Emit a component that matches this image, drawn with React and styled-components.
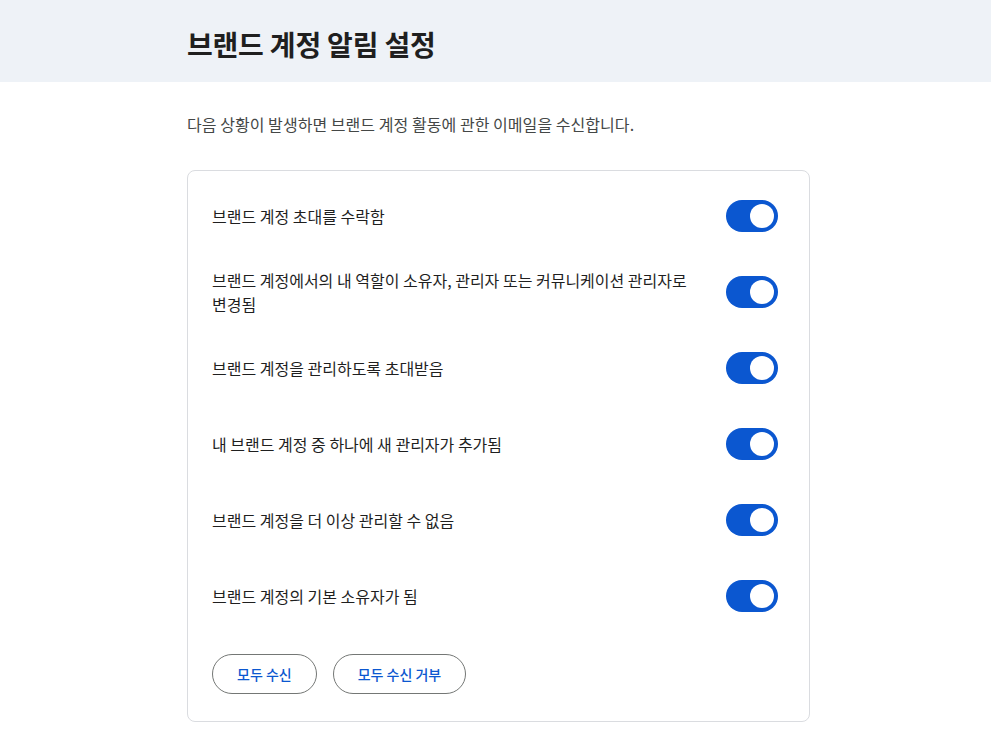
import React, { useState } from "react";
import styled, { createGlobalStyle } from "styled-components";

const GlobalStyle = createGlobalStyle`
  body {
    margin: 0;
    background: #fff;
    font-family: "Noto Sans CJK KR", "Noto Sans", Roboto, sans-serif;
    color: #1f1f1f;
  }
`;

const Header = styled.header`
  background: #eef2f7;
  height: 82px;
  display: flex;
  align-items: center;
  padding-left: 187px;
`;

const Title = styled.h1`
  margin: 6px 0 0;
  font-size: 28px;
  font-weight: 700;
  letter-spacing: -0.2px;
  color: #1f1f1f;
`;

const Main = styled.main`
  padding: 30px 0 0 187px;
`;

const Intro = styled.p`
  margin: 0 0 34px;
  font-size: 16px;
  line-height: 24px;
  letter-spacing: 0.05px;
  color: #444746;
`;

const Card = styled.section`
  box-sizing: border-box;
  width: 623px;
  border: 1px solid #dadce0;
  border-radius: 8px;
  padding: 7px 31px 27px 24px;
`;

const Row = styled.div`
  min-height: 76px;
  display: flex;
  align-items: center;
  justify-content: space-between;
  gap: 24px;
`;

const Label = styled.span`
  font-size: 16px;
  line-height: 24px;
  color: #1f1f1f;
  max-width: 490px;
`;

const Track = styled.button`
  flex: none;
  position: relative;
  width: 52px;
  height: 32px;
  border: none;
  border-radius: 16px;
  padding: 0;
  cursor: pointer;
  background: ${(p) => (p.$on ? "#0b57d0" : "#c4c7c5")};
`;

const Knob = styled.span`
  position: absolute;
  top: 4px;
  left: ${(p) => (p.$on ? "24px" : "4px")};
  width: 24px;
  height: 24px;
  border-radius: 50%;
  background: #fff;
`;

const Actions = styled.div`
  display: flex;
  gap: 16px;
  margin-top: 20px;
`;

const PillButton = styled.button`
  height: 40px;
  padding: 0 24px;
  border: 1px solid #747775;
  border-radius: 20px;
  background: #fff;
  color: #0b57d0;
  font-family: inherit;
  font-size: 14px;
  font-weight: 500;
  cursor: pointer;
`;

const ITEMS = [
  "브랜드 계정 초대를 수락함",
  "브랜드 계정에서의 내 역할이 소유자, 관리자 또는 커뮤니케이션 관리자로 변경됨",
  "브랜드 계정을 관리하도록 초대받음",
  "내 브랜드 계정 중 하나에 새 관리자가 추가됨",
  "브랜드 계정을 더 이상 관리할 수 없음",
  "브랜드 계정의 기본 소유자가 됨",
];

export default function App() {
  const [flags, setFlags] = useState(ITEMS.map(() => true));

  const toggle = (i) =>
    setFlags((f) => f.map((v, idx) => (idx === i ? !v : v)));

  return (
    <>
      <GlobalStyle />
      <Header>
        <Title>브랜드 계정 알림 설정</Title>
      </Header>
      <Main>
        <Intro>다음 상황이 발생하면 브랜드 계정 활동에 관한 이메일을 수신합니다.</Intro>
        <Card>
          {ITEMS.map((text, i) => (
            <Row key={i}>
              <Label>{text}</Label>
              <Track $on={flags[i]} onClick={() => toggle(i)}>
                <Knob $on={flags[i]} />
              </Track>
            </Row>
          ))}
          <Actions>
            <PillButton onClick={() => setFlags(ITEMS.map(() => true))}>
              모두 수신
            </PillButton>
            <PillButton onClick={() => setFlags(ITEMS.map(() => false))}>
              모두 수신 거부
            </PillButton>
          </Actions>
        </Card>
      </Main>
    </>
  );
}
